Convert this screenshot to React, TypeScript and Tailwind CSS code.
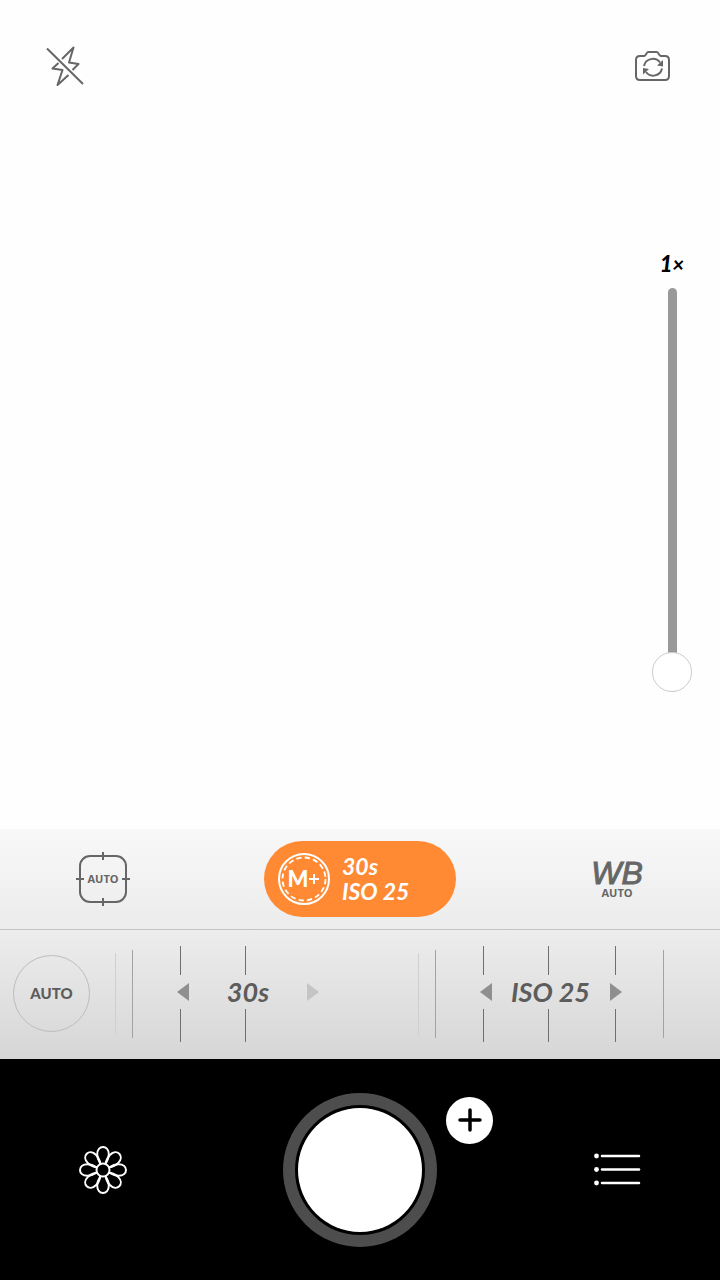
import { useState } from 'react';
import { clsx } from 'clsx';

const DIALS = [
  { label: '30s', name: 'shutter speed', ticks: [66, 131], atEnd: true },
  { label: 'ISO 25', name: 'ISO', ticks: [66, 131, 198], end: 246, atEnd: false },
];

const PETALS = [0, 45, 90, 135, 180, 225, 270, 315];

function FlashOffIcon() {
  return (
    <svg viewBox="0 0 40 40" className="size-10" fill="none" stroke="#666" strokeWidth="2" strokeLinejoin="round">
      <path d="M2 2.500 38 38" />
      <path d="M17 13 28.500 1.500 24 16.500 33.500 18 27.500 24" />
      <path d="M13.500 17 7.500 22.500 17.500 24 12.500 39 23.500 29" />
    </svg>
  );
}

function SwitchCameraIcon() {
  return (
    <svg viewBox="0 0 36 32" className="h-8 w-9" fill="none" stroke="#666" strokeWidth="2" strokeLinejoin="round">
      <path d="M5 6H9Q10 6 10.700 4.800L11.500 3.400Q12.200 2 13.700 2H21.300Q22.800 2 23.500 3.400L24.300 4.800Q25 6 26 6H30Q34 6 34 10V26Q34 30 30 30H5Q1 30 1 26V10Q1 6 5 6Z" />
      <path d="M9 16A9 9 0 0 1 25 12.500" />
      <path d="M27 18.500A9 9 0 0 1 11 22" />
      <path d="M28 10V16.500L22 15.500Z" fill="#666" stroke="none" />
      <path d="M8 24.500V18L14 19Z" fill="#666" stroke="none" />
    </svg>
  );
}

function FocusFrame() {
  return (
    <svg viewBox="0 0 56 56" className="size-14 [grid-area:1/1]" fill="none" stroke="#666" strokeWidth="2">
      <rect x="5" y="5" width="46" height="46" rx="10" />
      <path d="M28 1V9M28 47V55M1 28H9M47 28H55" />
    </svg>
  );
}

function ManualBadge() {
  return (
    <span className="grid place-items-center">
      <svg viewBox="0 0 52 52" className="size-13 [grid-area:1/1]" fill="none" stroke="#fff">
        <circle cx="26" cy="26" r="25" strokeWidth="2" />
        <circle cx="26" cy="26" r="21.500" strokeWidth="1.800" strokeDasharray="5.300 3.143" />
      </svg>
      <span className="flex items-center [grid-area:1/1]">
        <span className="text-[22px] leading-6 font-black">M</span>
        <svg viewBox="0 0 12 12" className="size-3" stroke="#fff" strokeWidth="2">
          <path d="M6 1V11M1 6H11" />
        </svg>
      </span>
    </span>
  );
}

function FlowerIcon() {
  return (
    <svg viewBox="-24 -24 48 48" className="size-12" fill="none" stroke="#fff" strokeWidth="2">
      <circle r="6.500" />
      {PETALS.map((angle) => (
        <path
          key={angle}
          transform={`rotate(${angle})`}
          d="M-2.500-6C-4.500-9-5.800-12-5.800-15.500C-5.800-20.500-3-23 0-23S5.800-20.500 5.800-15.500C5.800-12 4.500-9 2.500-6"
        />
      ))}
    </svg>
  );
}

function ListIcon() {
  return (
    <svg viewBox="0 0 48 34" className="h-[34px] w-12" stroke="#fff" strokeWidth="2.500" strokeLinecap="round">
      {[3, 16.5, 30].map((y) => (
        <g key={y}>
          <circle cx="3.500" cy={y} r="2.400" fill="#fff" stroke="none" />
          <path d={`M9 ${y}H46`} />
        </g>
      ))}
    </svg>
  );
}

function Dial({ dial }: { dial: (typeof DIALS)[number] }) {
  return (
    <div className="grid flex-1 items-center">
      <svg viewBox="0 0 302 96" className="h-24 w-[302px] [grid-area:1/1]" shapeRendering="crispEdges">
        <path d="M.5 7V89" stroke="#cfcfcf" />
        <path d="M17.500 4V92" stroke="#a3a3a3" />
        {dial.ticks.map((x) => (
          <path key={x} d={`M${x - 0.5} 0V29M${x - 0.5} 63V96`} stroke="#6f6f6f" />
        ))}
        {dial.end && <path d={`M${dial.end - 0.5} 4V92`} stroke="#a3a3a3" />}
      </svg>
      <div className="flex items-center pb-1 pl-[62px] [grid-area:1/1]">
        <button type="button" aria-label={`Decrease ${dial.name}`}>
          <svg viewBox="0 0 12 18" className="h-[18px] w-3" fill="#8f8f8f">
            <path d="M0 9 12 0V18Z" />
          </svg>
        </button>
        <span className="w-[118px] text-center text-[27px] leading-8 font-bold text-[#5c5c5c] italic">
          {dial.label}
        </span>
        <button type="button" disabled={dial.atEnd} aria-label={`Increase ${dial.name}`}>
          <svg viewBox="0 0 12 18" className={clsx('h-[18px] w-3', dial.atEnd ? 'fill-[#c4c4c4]' : 'fill-[#8f8f8f]')}>
            <path d="M12 9 0 0V18Z" />
          </svg>
        </button>
      </div>
    </div>
  );
}

export default function App() {
  const [zoom, setZoom] = useState(1);

  return (
    <div className="flex min-h-screen flex-col bg-[#fefefe] font-['Lato',sans-serif]">
      {/* Viewfinder */}
      <main className="flex flex-1 flex-col">
        <div className="flex justify-between px-[45px] pt-[46px]">
          <button type="button" aria-label="Flash off">
            <FlashOffIcon />
          </button>
          <button type="button" aria-label="Switch camera" className="mr-1">
            <SwitchCameraIcon />
          </button>
        </div>
        <div className="mt-auto mr-7 mb-[137px] flex flex-col items-center gap-3 self-end">
          <label htmlFor="zoom" className="text-[22px] leading-6 font-black text-black italic">
            {zoom}
            <span className="text-xl leading-6">×</span>
          </label>
          <input
            id="zoom"
            type="range"
            min={1}
            max={8}
            value={zoom}
            onChange={(e) => setZoom(Number(e.target.value))}
            className="h-[404px] w-10 appearance-none bg-transparent [direction:rtl] [writing-mode:vertical-lr] [&::-webkit-slider-runnable-track]:w-[9px] [&::-webkit-slider-runnable-track]:rounded-full [&::-webkit-slider-runnable-track]:bg-[#999] [&::-webkit-slider-thumb]:-ml-4 [&::-webkit-slider-thumb]:size-10 [&::-webkit-slider-thumb]:appearance-none [&::-webkit-slider-thumb]:rounded-full [&::-webkit-slider-thumb]:border [&::-webkit-slider-thumb]:border-[#ccc] [&::-webkit-slider-thumb]:bg-white"
          />
        </div>
      </main>

      {/* Mode bar */}
      <div className="flex h-[101px] items-center justify-between border-b border-[#c4c4c4] bg-linear-to-b from-[#f8f8f8] to-[#ececec] px-12">
        <button type="button" className="grid w-[110px] place-items-center">
          <FocusFrame />
          <span className="font-['Open_Sans',sans-serif] text-[11px] leading-4 font-bold text-[#666] [grid-area:1/1]">
            AUTO
          </span>
        </button>
        <button
          type="button"
          className="flex h-19 w-48 items-center gap-3 rounded-full bg-[#ff8a33] pl-[14px] text-left text-white"
        >
          <ManualBadge />
          <span className="text-[23px] leading-[25px] font-bold italic">
            30s
            <br />
            ISO 25
          </span>
        </button>
        <button type="button" className="flex w-[110px] flex-col items-center text-[#666]">
          <span className="font-['Liberation_Sans',sans-serif] text-[32px] leading-7 italic [-webkit-text-stroke:1px_#666]">
            WB
          </span>
          <span className="font-['Open_Sans',sans-serif] text-[11px] leading-3 font-bold">AUTO</span>
        </button>
      </div>

      {/* Exposure dials */}
      <div className="flex h-[129px] items-center bg-linear-to-b from-[#ededed] to-[#d6d6d6] pb-0.5 pl-[13px]">
        <button
          type="button"
          className="mr-[25px] size-[77px] shrink-0 rounded-full border border-[#bdbdbd] text-[15px] font-black text-[#5c5c5c]"
        >
          AUTO
        </button>
        {DIALS.map((dial) => (
          <Dial key={dial.label} dial={dial} />
        ))}
      </div>

      {/* Capture controls */}
      <footer className="flex h-[221px] items-center justify-between bg-black px-12">
        <button type="button" aria-label="Macro" className="flex w-[110px] justify-center">
          <FlowerIcon />
        </button>
        <div className="relative">
          <button
            type="button"
            aria-label="Take photo"
            className="block size-[154px] rounded-full border-[12px] border-[#4d4d4d] p-[3px]"
          >
            <span className="block size-full rounded-full bg-white" />
          </button>
          <button
            type="button"
            aria-label="More capture modes"
            className="absolute top-1 left-full ml-[9px] flex size-[47px] items-center justify-center rounded-full bg-white"
          >
            <svg viewBox="0 0 24 24" className="size-6" stroke="#000" strokeWidth="3.500" strokeLinecap="round">
              <path d="M12 2V22M2 12H22" />
            </svg>
          </button>
        </div>
        <button type="button" aria-label="Menu" className="flex w-[110px] justify-center">
          <ListIcon />
        </button>
      </footer>
    </div>
  );
}
